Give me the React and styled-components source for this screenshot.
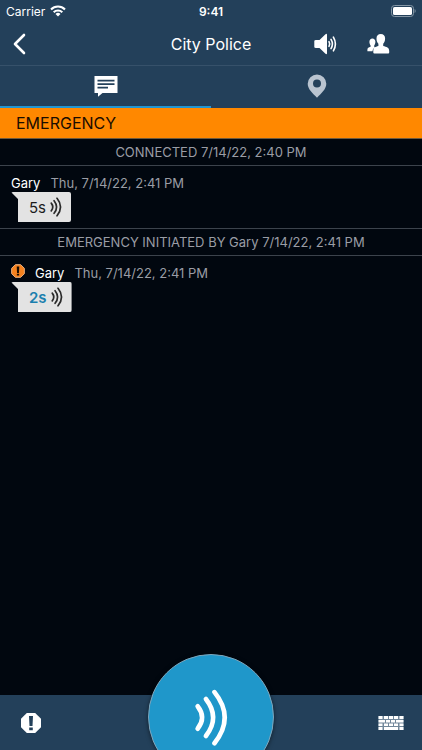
import React from 'react';
import styled, { createGlobalStyle } from 'styled-components';

const GlobalStyle = createGlobalStyle`
	* {
		box-sizing: border-box;
	}

	body {
		margin: 0;
		background: #01070f;
		font-family: Inter, 'Liberation Sans', sans-serif;
	}

	button {
		border: 0;
		padding: 0;
		background: none;
		color: inherit;
		font: inherit;
		cursor: pointer;
	}

	svg {
		display: block;
	}
`;

const log = [
	{ type: 'event', text: 'CONNECTED 7/14/22, 2:40 PM' },
	{ type: 'voice', from: 'Gary', time: 'Thu, 7/14/22, 2:41 PM', length: '5s' },
	{ type: 'event', text: 'EMERGENCY INITIATED BY Gary 7/14/22, 2:41 PM' },
	{
		type: 'voice',
		from: 'Gary',
		time: 'Thu, 7/14/22, 2:41 PM',
		length: '2s',
		emergency: true,
	},
];

function Waves({ width, height, stroke = 14 }) {
	return (
		<svg
			width={width}
			height={height}
			viewBox="0 0 106 172"
			fill="none"
			stroke="currentColor"
			strokeWidth={stroke}
			strokeLinecap="round"
			aria-hidden="true"
		>
			<path d="M11 52Q38 86 11 120" />
			<path d="M36 30Q80 86 36 142" />
			<path d="M62 9Q124 86 62 164" />
		</svg>
	);
}

function Alert({ size, fill, mark, edge = 'none' }) {
	return (
		<svg width={size} height={size} viewBox="0 0 22 22" aria-hidden="true">
			<path
				d="M6.8 1h8.4L21 6.8v8.4L15.2 21H6.8L1 15.2V6.8z"
				fill={fill}
				stroke={edge}
				strokeWidth="1.4"
			/>
			<path d="M9 4h4l-.5 10h-3zM9.2 15.4h3.6v2.8H9.2z" fill={mark} />
		</svg>
	);
}

function Wifi() {
	return (
		<svg width="16" height="12" viewBox="0 0 16 12" aria-hidden="true">
			<g fill="none" stroke="#fff" strokeWidth="2.1">
				<path d="M1 4.4a10 10 0 0 1 14 0" />
				<path d="M3.7 7.2a6.2 6.2 0 0 1 8.6 0" />
			</g>
			<path d="M8 11.6L5.5 9a3.6 3.6 0 0 1 5 0z" fill="#fff" />
		</svg>
	);
}

function Battery() {
	return (
		<svg width="25" height="12" viewBox="0 0 25 12" aria-hidden="true">
			<rect x=".5" y=".5" width="22" height="11" rx="3" fill="none" stroke="#8496a5" />
			<rect x="2" y="2" width="19" height="8" rx="1.6" fill="#fff" />
			<path d="M23.6 4v4c1.4-.6 1.4-3.4 0-4z" fill="#8496a5" />
		</svg>
	);
}

function Speaker() {
	return (
		<svg width="23" height="22" viewBox="0 0 23 22" aria-hidden="true">
			<path
				d="M2 7h3.5L11.500 1.200Q13 .3 13 1.800V20.200Q13 21.700 11.500 20.800L5.500 15H2Q.3 15 .3 14V8Q.3 7 2 7z"
				fill="#fff"
			/>
			<g fill="none" stroke="#fff" strokeWidth="1.600" strokeLinecap="round">
				<path d="M15 8.600q1.400 2.400 0 4.800" />
				<path d="M17 6.400q2.800 4.600 0 9.200" />
				<path d="M19.400 4.200q4 6.800 0 13.600" />
			</g>
		</svg>
	);
}

function People() {
	return (
		<svg width="23" height="20" viewBox="0 0 23 20" fill="#fff" aria-hidden="true">
			<path d="M5.400 4.500c1.800 0 3 1.300 3 3.300 0 1.500-.5 2.800-1.200 3.600v1.300l1 .5c-1.500.8-2.500 1.900-2.700 4H.4v-1.400c0-2 1.200-2.500 3.200-3.100v-1.300c-.7-.8-1.200-2.100-1.200-3.600 0-2 1.200-3.300 3-3.300z" />
			<path d="M13.800 0c2.700 0 4.300 1.700 4.300 4.400 0 2.300-.7 4.200-1.900 5.300V12c3.300.9 6 1.500 6 5v1.500q0 1-1 1H7.300q-1 0-1-1V17c0-3.500 2-4.100 5.100-5V9.700C10.200 8.600 9.500 6.700 9.500 4.400 9.500 1.700 11.100 0 13.800 0z" />
		</svg>
	);
}

function Keyboard() {
	return (
		<svg width="26" height="14" viewBox="0 0 26 14" aria-hidden="true">
			<rect x=".5" width="25" height="14" fill="#71879a" />
			<g fill="#fff">
				<path d="M.5 0h4v3h-4zM6 0h4v3H6zM11 0h4v3h-4zM16 0h4v3h-4zM21.500 0h4v3h-4z" />
				<path d="M.5 4H7v2.500H.5zM8 4h4v2.500H8zM13 4h4v2.500h-4zM18 4h7.500v2.500H18z" />
				<path d="M.5 7.500h4V10h-4zM6 7.500h4V10H6zM11 7.500h4V10h-4zM16 7.500h4V10h-4zM21.500 7.500h4V10h-4z" />
				<path d="M.5 11h4v3h-4zM6 11h14v3H6zM21.500 11h4v3h-4z" />
			</g>
		</svg>
	);
}

function VoiceMessage({ from, time, length, emergency }) {
	return (
		<Message>
			<Meta>
				{emergency && (
					<Flag>
						<Alert size={14} fill="#f5821f" mark="#1a0d00" edge="#f3b98a" />
					</Flag>
				)}
				<Sender>{from}</Sender>
				<time>{time}</time>
			</Meta>
			<Bubble $unread={emergency}>
				<span>{length}</span>
				<Waves width={12} height={20} stroke={15} />
			</Bubble>
		</Message>
	);
}

function App() {
	return (
		<Screen>
			<GlobalStyle />
			<Header>
				<StatusBar>
					<Carrier>
						Carrier
						<Wifi />
					</Carrier>
					<Clock>9:41</Clock>
					<Battery />
				</StatusBar>
				<NavBar>
					<NavButton aria-label="Back">
						<svg width="14" height="22" viewBox="0 0 14 22" aria-hidden="true">
							<path
								d="M12 2L3 11l9 9"
								fill="none"
								stroke="#fff"
								strokeWidth="2.6"
								strokeLinecap="round"
								strokeLinejoin="round"
							/>
						</svg>
					</NavButton>
					<h1>City Police</h1>
					<Actions>
						<NavButton aria-label="Speaker">
							<Speaker />
						</NavButton>
						<NavButton aria-label="Members">
							<People />
						</NavButton>
					</Actions>
				</NavBar>
				<Tabs>
					<Tab $active aria-label="Messages">
						<svg width="24" height="21" viewBox="0 0 24 21" aria-hidden="true">
							<path d="M.5 0h23v17h-15L4 20.8V17H.5z" fill="#fff" />
							<path
								d="M3.500 4.700h17M3.500 8.200h17M3.500 11.700h10.500"
								stroke="#23405a"
								strokeWidth="1.7"
							/>
						</svg>
					</Tab>
					<Tab aria-label="Map">
						<svg width="20" height="24" viewBox="0 0 20 24" aria-hidden="true">
							<path
								d="M10 .5a9.300 9.300 0 0 1 9.300 9.300c0 5.500-5 9.500-9.300 13.900C5.700 19.300.7 15.300.7 9.800A9.300 9.300 0 0 1 10 .5zM10 5.500a4 4 0 1 0 0 8 4 4 0 0 0 0-8z"
								fill="#b9c4d0"
							/>
						</svg>
					</Tab>
				</Tabs>
			</Header>
			<Banner>EMERGENCY</Banner>
			<Log>
				{log.map((item, i) =>
					item.type === 'event' ? (
						<Event key={i}>{item.text}</Event>
					) : (
						<VoiceMessage key={i} {...item} />
					)
				)}
			</Log>
			<Footer>
				<FooterButton aria-label="Emergency">
					<Alert size={22} fill="#fff" mark="#23405a" />
				</FooterButton>
				<TalkButton aria-label="Push to talk">
					<Waves width={35} height={57} />
				</TalkButton>
				<FooterButton aria-label="Keyboard">
					<Keyboard />
				</FooterButton>
			</Footer>
		</Screen>
	);
}

export default App;

const Screen = styled.div`
	display: flex;
	flex-direction: column;
	height: 100vh;
	overflow: hidden;
	background: #01070f;
	color: #fff;
`;

const Header = styled.header`
	background: #23405a;
`;

const StatusBar = styled.div`
	display: grid;
	grid-template-columns: 1fr auto 1fr;
	align-items: center;
	height: 22px;
	padding: 0 6px;
	font-size: 12px;

	> svg {
		justify-self: end;
	}
`;

const Carrier = styled.span`
	display: flex;
	align-items: center;
	gap: 5px;
`;

const Clock = styled.span`
	font-weight: 600;
`;

const NavBar = styled.nav`
	display: grid;
	grid-template-columns: 1fr auto 1fr;
	align-items: center;
	height: 44px;
	padding: 0 32px 0 12px;
	border-bottom: 1px solid #36516a;

	h1 {
		margin: 0;
		padding-left: 20px;
		font-size: 16px;
		font-weight: 400;
	}
`;

const NavButton = styled.button`
	justify-self: start;
`;

const Actions = styled.div`
	display: flex;
	align-items: center;
	justify-self: end;
	gap: 30px;
`;

const Tabs = styled.div`
	display: flex;
	height: 42px;
`;

const Tab = styled.button`
	display: flex;
	flex: 1;
	align-items: center;
	justify-content: center;
	border-bottom: 2px solid ${({ $active }) => ($active ? '#2196d2' : 'transparent')};
`;

const Banner = styled.div`
	padding: 0 16px;
	background: #ff8800;
	border-bottom: 1px solid #6f5a3c;
	color: #1a0d00;
	font-size: 16px;
	line-height: 30px;
`;

const Log = styled.main`
	flex: 1;
`;

const Event = styled.p`
	margin: 0;
	border-bottom: 1px solid #3c434c;
	color: #9a9da5;
	font-size: 13px;
	line-height: 26px;
	text-align: center;

	div + & {
		border-top: 1px solid #3c434c;
	}
`;

const Message = styled.div`
	padding: 8px 11px 6px;
`;

const Meta = styled.div`
	display: flex;
	gap: 10px;
	color: #9a9da5;
	font-size: 13px;
	line-height: 18px;
`;

const Flag = styled.span`
	line-height: 0;
`;

const Sender = styled.span`
	color: #fff;
`;

const Bubble = styled.button`
	display: flex;
	align-items: center;
	gap: 4px;
	height: 30px;
	padding: 0 9px 0 18px;
	background: #e3e3e3;
	border-radius: 2px;
	clip-path: polygon(0 0, 100% 0, 100% 100%, 7px 100%, 7px 7px);
	color: #2b2b2b;
	font-size: 15px;

	span {
		color: ${({ $unread }) => ($unread ? '#1b7fae' : '#1c1c1c')};
		font-weight: ${({ $unread }) => ($unread ? 600 : 400)};
	}
`;

const Footer = styled.footer`
	position: relative;
	display: flex;
	align-items: center;
	justify-content: space-between;
	height: 55px;
	padding: 0 18px 0 20px;
	background: #23405a;
`;

const FooterButton = styled.button`
	display: flex;
`;

const TalkButton = styled.button`
	position: absolute;
	top: -41px;
	left: 50%;
	display: flex;
	align-items: center;
	justify-content: center;
	width: 126px;
	height: 126px;
	border: 1px solid #7fa6bc;
	border-radius: 50%;
	background: #1f97ca;
	box-shadow: 0 1px 4px rgba(0, 0, 0, 0.5);
	transform: translateX(-50%);
`;
